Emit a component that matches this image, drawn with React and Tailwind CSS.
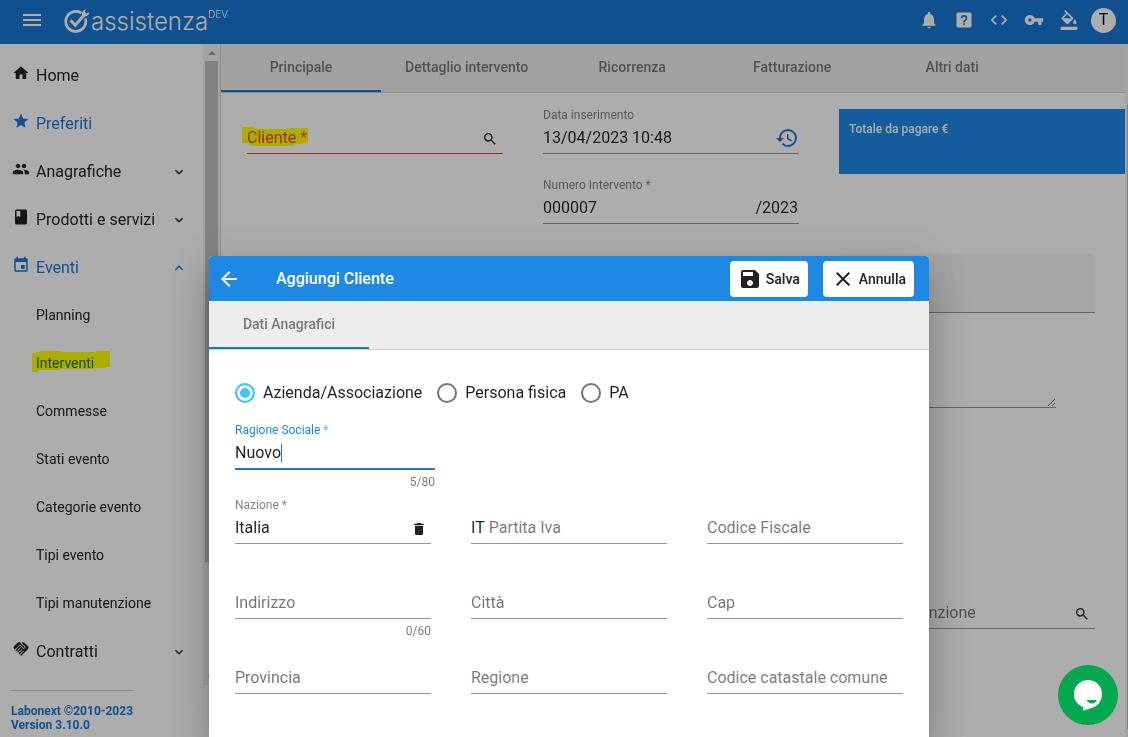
import React, { useState } from 'react';
import {
  MdArrowBack,
  MdClass,
  MdClose,
  MdCode,
  MdDelete,
  MdEvent,
  MdExpandLess,
  MdExpandMore,
  MdFormatColorFill,
  MdHandshake,
  MdHistory,
  MdHome,
  MdMenu,
  MdNotifications,
  MdPeople,
  MdSave,
  MdSearch,
  MdStar,
  MdVpnKey
} from 'react-icons/md';

const navItems = [
  { label: 'Home', icon: MdHome },
  { label: 'Preferiti', icon: MdStar, active: true },
  { label: 'Anagrafiche', icon: MdPeople, chevron: MdExpandMore },
  { label: 'Prodotti e servizi', icon: MdClass, chevron: MdExpandMore },
  {
    label: 'Eventi',
    icon: MdEvent,
    active: true,
    chevron: MdExpandLess,
    children: [
      'Planning',
      'Interventi',
      'Commesse',
      'Stati evento',
      'Categorie evento',
      'Tipi evento',
      'Tipi manutenzione'
    ]
  },
  { label: 'Contratti', icon: MdHandshake, chevron: MdExpandMore }
];

const HelpBox = () => (
  <svg viewBox="0 0 24 24" width="20" height="20" fill="currentColor" fillRule="evenodd">
    <path d="M11,18H13V16H11V18M12,6A4,4 0 0,0 8,10H10A2,2 0 0,1 12,8A2,2 0 0,1 14,10C14,12 11,11.75 11,15H13C13,12.75 16,12.5 16,10A4,4 0 0,0 12,6M5,3H19A2,2 0 0,1 21,5V19A2,2 0 0,1 19,21H5A2,2 0 0,1 3,19V5A2,2 0 0,1 5,3Z" />
  </svg>
);

const topActions = [
  { label: 'Notifiche', icon: <MdNotifications size={20} /> },
  { label: 'Aiuto', icon: <HelpBox /> },
  { label: 'Codice', icon: <MdCode size={20} /> },
  { label: 'Accessi', icon: <MdVpnKey size={20} /> },
  { label: 'Tema', icon: <MdFormatColorFill size={20} /> }
];

const Logo = () => (
  <a href="#home" className="flex items-start pt-1 font-['Inter'] font-light text-white">
    <svg viewBox="0 0 28 26" width="28" height="26" fill="none" stroke="currentColor">
      <path d="M17.5 4.6A10 10 0 1 0 22.6 11.5" strokeWidth="2.8" strokeLinecap="round" />
      <path d="M7.5 12.2 12.2 17.2 21.6 6.6" strokeWidth="3" />
      <path
        d="M19 7.2C18.4 4.2 20.2 1.6 23.2 1.4L21.8 3.8 23.6 5.4 26.3 4.2C26.3 7 23.6 9 20.8 8.4Z"
        fill="currentColor"
        stroke="none"
      />
    </svg>
    <span className="text-2xl leading-7">assistenza</span>
    <sup className="top-0 text-[10px] leading-3">DEV</sup>
  </a>
);

const Header = () => (
  <header className="flex h-11 items-center bg-[#1976d2] pr-3 pb-1 pl-5 text-white">
    <button type="button" aria-label="Menu" className="mr-[19px]">
      <MdMenu size={24} />
    </button>
    <Logo />
    <div className="ml-auto flex items-center gap-[15px]">
      {topActions.map((action) => (
        <button key={action.label} type="button" aria-label={action.label}>
          {action.icon}
        </button>
      ))}
    </div>
    <button
      type="button"
      className="ml-3 flex size-[25px] items-center justify-center rounded-full bg-white text-base text-black"
    >
      T
    </button>
  </header>
);

/* Felt-pen mark laid over a word */
const Marker = ({ className, d }) => (
  <svg
    viewBox="0 0 78 21"
    preserveAspectRatio="none"
    className={`pointer-events-none absolute mix-blend-multiply ${className}`}
  >
    <path d={d} fill="#ffff00" />
  </svg>
);

const Sidebar = () => (
  <aside className="flex w-[221px] shrink-0 flex-col border-r border-gray-300 bg-white">
    <div className="mb-[5px] flex min-h-0 flex-1">
      <nav className="min-w-0 flex-1 overflow-hidden pt-[7px]">
        {navItems.map((item) => (
          <div key={item.label}>
            <a
              href="#menu"
              className={`flex h-12 items-center gap-1.5 pr-4 pl-3 text-base ${
                item.active ? 'text-[#1976d2]' : 'text-[#212121]'
              }`}
            >
              <item.icon size={18} className="mb-1 shrink-0" />
              <span className="flex-1 pt-0.5">{item.label}</span>
              {item.chevron && <item.chevron size={16} className="mt-0.5" />}
            </a>
            {item.children?.map((child) => (
              <a key={child} href="#menu" className="flex h-12 items-center pl-9 text-sm text-[#212121]">
                {child === 'Interventi' ? (
                  <span className="relative text-[#1976d2]">
                    {child}
                    <Marker
                      className="-top-0.5 -left-1 h-[21px] w-[78px]"
                      d="M0 2 8 1V0H28V1H64V0H78V16H74V17H62V18H27V19H6V21H0Z"
                    />
                  </span>
                ) : (
                  child
                )}
              </a>
            ))}
          </div>
        ))}
      </nav>
      <div className="flex w-[17px] flex-col items-center bg-[#f1f1f1]">
        <div className="flex h-[17px] items-center">
          <div className="border-x-4 border-b-4 border-x-transparent border-b-[#a3a3a3]" />
        </div>
        <div className="h-[501px] w-[13px] bg-[#c1c1c1]" />
        <div className="mt-auto flex h-[17px] items-center">
          <div className="border-x-4 border-t-4 border-x-transparent border-t-[#505050]" />
        </div>
      </div>
    </div>
    <footer className="ml-[11px] w-fit border-t border-gray-300 pt-[13px] pb-[5px] text-xs leading-[14px] font-bold text-[#1976d2]">
      <p>Labonext ©2010-2023</p>
      <p>Version 3.10.0</p>
    </footer>
  </aside>
);

const Tab = ({ label, active }) => (
  <button
    type="button"
    role="tab"
    aria-selected={!!active}
    className={`h-12 min-w-40 border-b-2 px-6 text-sm font-medium text-black/50 ${
      active ? 'border-[#1976d2]' : 'border-transparent'
    }`}
  >
    {label}
  </button>
);

/* The label floats over the line when there is a value, and sits on it otherwise */
const Field = ({ id, label, value, prefix, suffix, counter, required, error, focused, marker }) => {
  const [text, setText] = useState(value || '');
  const caption = (
    <>
      {label}
      {required && <span className={focused ? 'text-[#40c4ff]' : ''}> *</span>}
    </>
  );

  let line = 'border-[#949494]';
  if (error) line = 'border-[#f44336]';
  if (focused) line = 'border-[#1976d2]';

  return (
    <div>
      <div className="h-4 text-xs leading-4">
        {text && (
          <label htmlFor={id} className={focused ? 'text-[#1e88e5]' : 'text-black/50'}>
            {caption}
          </label>
        )}
      </div>
      <div className={`flex items-center text-base ${focused ? 'h-8 border-b-2' : 'h-[31px] border-b'} ${line}`}>
        {prefix && <span className="mr-1 text-black/87">{prefix}</span>}
        {!text && (
          <label
            htmlFor={id}
            className={`relative whitespace-nowrap ${error ? 'text-[#f44336]' : 'text-black/54'}`}
          >
            {caption}
            {marker}
          </label>
        )}
        <input
          id={id}
          value={text}
          onChange={(e) => setText(e.target.value)}
          className={`min-w-0 bg-transparent text-black/87 outline-none ${
            focused ? 'field-sizing-content caret-transparent' : 'w-0 flex-1'
          }`}
        />
        {focused && <span className="h-[18px] w-px bg-[#1976d2]" />}
        {suffix}
      </div>
      {counter && <p className="mt-1 text-right text-xs leading-4 text-black/54">{counter}</p>}
    </div>
  );
};

const SearchButton = () => (
  <button type="button" aria-label="Cerca" className="mt-0.5 pr-[5px] text-[#212121]">
    <MdSearch size={16} />
  </button>
);

const Intervento = () => (
  <main className="flex min-w-0 flex-1">
    <div className="min-w-0 flex-1 bg-white">
      <div role="tablist" className="flex border-b border-[#d0d0d0] bg-[#ededed]">
        <Tab label="Principale" active />
        <Tab label="Dettaglio intervento" />
        <Tab label="Ricorrenza" />
        <Tab label="Fatturazione" />
        <Tab label="Altri dati" />
      </div>
      <div className="grid grid-cols-[256fr_256fr_286fr] gap-10 pt-[14px] pl-[26px]">
        <Field
          id="cliente"
          label="Cliente"
          required
          error
          suffix={<SearchButton />}
          marker={
            <Marker
              className="top-px -left-[5px] h-5 w-[66px]"
              d="M0 0H12L18 2H50L60 1H78V16L70 18H60V20H12L8 17H0Z"
            />
          }
        />
        <div className="flex flex-col gap-[23px]">
          <Field
            id="data"
            label="Data inserimento"
            value="13/04/2023 10:48"
            suffix={
              <button type="button" aria-label="Data e ora attuali" className="text-[#1976d2]">
                <MdHistory size={24} />
              </button>
            }
          />
          <Field
            id="numero"
            label="Numero Intervento"
            required
            value="000007"
            suffix={<span className="pr-px text-black/87">/2023</span>}
          />
        </div>
        <div className="flex flex-col pt-0.5">
          <div className="h-[65px] bg-[#1e88e5] px-2.5 py-3 text-xs leading-4 font-medium text-white">
            Totale da pagare €
          </div>
          <input
            aria-label="Descrizione"
            className="mt-20 mr-[30px] h-[59px] rounded-t border-b border-[#949494] bg-[#f3f3f3]"
          />
          <textarea
            aria-label="Note"
            className="mt-9 mr-[69px] h-[59px] resize-y border-b border-[#949494]"
          />
          <div className="mt-[174px] mr-[30px]">
            <Field id="manutenzione" label="Tipo manutenzione" suffix={<SearchButton />} />
          </div>
        </div>
      </div>
    </div>
    <div className="w-[3px] bg-[#f1f1f1] pt-[61px] pb-2 pl-0.5">
      <div className="h-full bg-[#c1c1c1]" />
    </div>
  </main>
);

const tipi = ['Azienda/Associazione', 'Persona fisica', 'PA'];

const ClienteDialog = () => (
  <div
    role="dialog"
    aria-labelledby="dialog-title"
    className="w-[720px] overflow-hidden rounded-t bg-white"
  >
    <div className="flex h-[45px] items-center bg-[#1e88e5] pr-[15px] pl-2 text-white">
      <button type="button" aria-label="Indietro">
        <MdArrowBack size={24} />
      </button>
      <h2 id="dialog-title" className="ml-[35px] flex-1 text-base font-medium">
        Aggiungi Cliente
      </h2>
      <div className="flex gap-[15px] text-sm font-medium text-[#212121]">
        <button type="button" className="flex h-9 items-center gap-1 rounded bg-white px-2">
          <MdSave size={24} />
          Salva
        </button>
        <button type="button" className="flex h-9 items-center gap-1 rounded bg-white px-2">
          <MdClose size={24} />
          Annulla
        </button>
      </div>
    </div>
    <div role="tablist" className="flex border-b border-[#d0d0d0] bg-[#ededed]">
      <Tab label="Dati Anagrafici" active />
    </div>
    <form className="px-[26px] pt-[33px]">
      <div className="flex gap-[15px]">
        {tipi.map((tipo, i) => (
          <label key={tipo} className="flex h-5 items-center gap-2 text-base text-black/87">
            <input
              type="radio"
              name="tipo"
              defaultChecked={i === 0}
              className="size-5 appearance-none rounded-full border-2 border-[#757575] shadow-[inset_0_0_0_3px_white] checked:border-[#40c4ff] checked:bg-[#40c4ff]"
            />
            {tipo}
          </label>
        ))}
      </div>
      <div className="mt-[19px] h-[75px] w-[200px]">
        <Field id="ragione" label="Ragione Sociale" required focused value="Nuovo" counter="5/80" />
      </div>
      <div className="grid auto-rows-[75px] grid-cols-3 gap-x-10">
        <Field
          id="nazione"
          label="Nazione"
          required
          value="Italia"
          suffix={
            <button type="button" aria-label="Elimina" className="mt-0.5 pr-1 text-[#212121]">
              <MdDelete size={16} />
            </button>
          }
        />
        <Field id="piva" label="Partita Iva" prefix="IT" />
        <Field id="cf" label="Codice Fiscale" />
        <Field id="indirizzo" label="Indirizzo" counter="0/60" />
        <Field id="citta" label="Città" />
        <Field id="cap" label="Cap" />
        <Field id="provincia" label="Provincia" />
        <Field id="regione" label="Regione" />
        <Field id="catastale" label="Codice catastale comune" />
      </div>
    </form>
  </div>
);

const ChatButton = () => (
  <button
    type="button"
    aria-label="Chat"
    className="fixed right-2.5 bottom-3 z-20 flex size-[60px] items-center justify-center rounded-full bg-[#05a84f]"
  >
    <svg viewBox="0 0 28 31" width="28" height="31">
      <path d="M14 0A14 14 0 0 1 28 14C28 21 24 25.5 19 27.6L9.2 30.8V27.2A14 14 0 0 1 14 0Z" fill="#fff" />
      <path d="M12.6 20H22.8C21.6 24.6 14.4 24.6 12.6 20Z" fill="#05a84f" />
    </svg>
  </button>
);

const App = () => (
  <div className="flex h-screen flex-col overflow-hidden font-['Roboto',sans-serif]">
    <Header />
    <div className="flex min-h-0 flex-1">
      <Sidebar />
      <Intervento />
    </div>
    <div className="fixed inset-0 z-10 flex justify-center overflow-hidden bg-black/32 pt-64 pl-2.5">
      <div className="flex rounded-t shadow-[0_11px_15px_-7px_rgba(0,0,0,0.2),0_24px_38px_3px_rgba(0,0,0,0.14),0_9px_46px_8px_rgba(0,0,0,0.12)]">
        <ClienteDialog />
      </div>
    </div>
    <ChatButton />
  </div>
);

export default App;
